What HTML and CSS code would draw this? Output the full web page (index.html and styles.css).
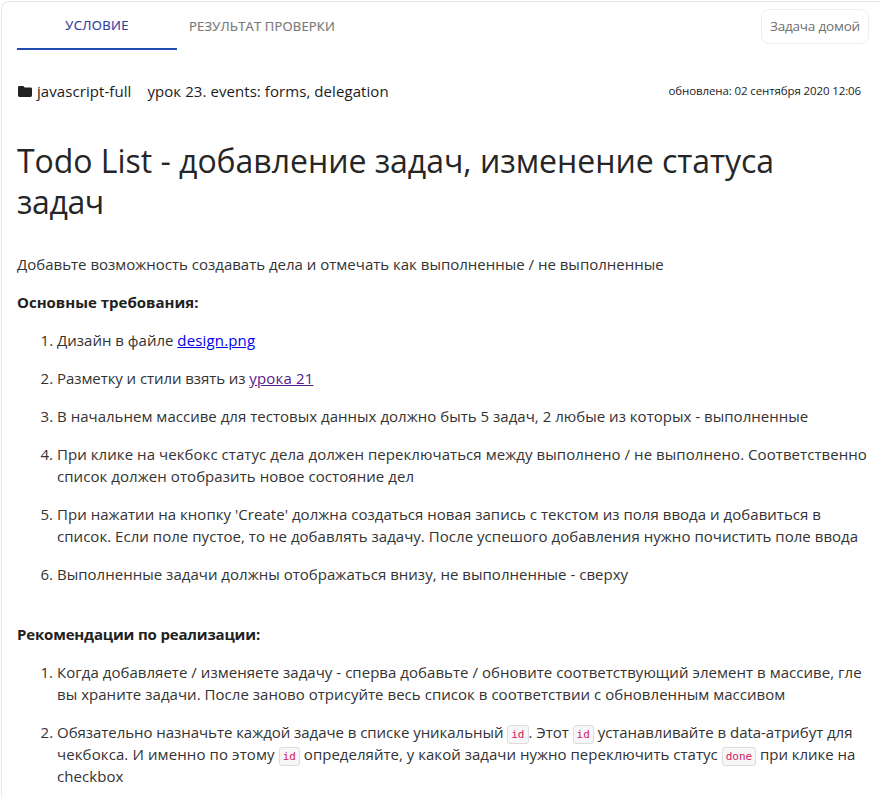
FILE: index.html
```html
<!DOCTYPE html>
<html lang="ru">
<head>
<meta charset="utf-8">
<title>Todo List</title>
<link rel="stylesheet" href="styles.css">
</head>
<body>
<main class="card">
  <header class="topbar">
    <nav class="tabs">
      <button class="tab tab-active">УСЛОВИЕ</button>
      <button class="tab">РЕЗУЛЬТАТ ПРОВЕРКИ</button>
    </nav>
    <div class="badge">Задача домой</div>
  </header>
  <div class="meta">
    <svg class="folder" viewBox="0 0 14 11"><path d="M1.4 0H5.3L6.7 1.4H12.6Q14 1.4 14 2.8V9.6Q14 11 12.6 11H1.4Q0 11 0 9.6V1.4Q0 0 1.4 0Z"/></svg>
    <span class="course">javascript-full</span>
    <span class="lesson">урок 23. events: forms, delegation</span>
    <span class="updated">обновлена: 02 сентября 2020 12:06</span>
  </div>
  <h1>Todo List - добавление задач, изменение статуса<br><span class="title-end">задач</span></h1>
  <section class="content">
    <p>Добавьте возможность создавать дела и отмечать как выполненные / не выполненные</p>
    <p><strong>Основные требования:</strong></p>
    <ol>
      <li>Дизайн в файле <a href="#design">design.png</a></li>
      <li><span class="tight-2">Разметку и стили взять из </span><a class="visited" href="#lesson">урока 21</a></li>
      <li><span class="loose-1">В начальнем массиве для тестовых данных должно быть 5 задач, 2 любые из которых - выполненные</span></li>
      <li class="loose-3">При клике на чекбокс статус дела должен переключаться между выполнено / не выполнено. Соответственно<br>список должен отобразить новое состояние дел</li>
      <li class="loose-2">При нажатии на кнопку 'Create' должна создаться новая запись с текстом из поля ввода и добавиться в<br>список. Если поле пустое, то не добавлять задачу. После успешого добавления нужно почистить поле ввода</li>
      <li class="loose-1">Выполненные задачи должны отображаться внизу, не выполненные - сверху</li>
    </ol>
    <p class="second"><strong>Рекомендации по реализации:</strong></p>
    <ol>
      <li class="loose-2">Когда добавляете / изменяете задачу - сперва добавьте / обновите соответствующий элемент в массиве, гле<br>вы храните задачи. После заново отрисуйте весь список в соответствии с обновленным массивом</li>
      <li><span class="tight-1">Обязательно назначьте каждой задаче в списке уникальный <code>id</code>. Этот <code>id</code> устанавливайте в data-атрибут для</span><br><span class="loose-4">чекбокса. И именно по этому </span><code>id</code> <span class="loose-1">определяйте, у какой задачи нужно переключить статус</span> <code>done</code> <span class="tight-1">при клике на</span><br><span class="loose-3">checkbox</span></li>
    </ol>
  </section>
</main>
</body>
</html>
```
FILE: styles.css
```css
* { box-sizing: border-box; }
body { margin: 0; width: 881px; height: 797px; overflow: hidden; background: #fff; color: #333; font-family: "Open Sans", "Noto Sans", sans-serif; }
.card { margin: 1px 0 0 1px; height: 830px; width: 900px; padding: 0 31px 0 15px; border: 1px solid #e8e8e8; border-radius: 8px; white-space: nowrap; }
.topbar { display: flex; height: 48px; justify-content: space-between; }
.tabs { display: flex; }
.tab { padding: 0 12px; height: 48px; border: 0; background: none; color: #7a7a7a; font: 500 13px "Open Sans", sans-serif; letter-spacing: 0.19px; -webkit-text-stroke: 0.2px; }
.tab-active { width: 160px; color: #303f9f; border-bottom: 2px solid #1f4cae; letter-spacing: 0.36px; }
.badge { margin: 7px 0 0; height: 35px; width: 108px; border: 1px solid #eee; border-radius: 8px; color: #707070; font-size: 13.5px; letter-spacing: -0.19px; line-height: 33px; text-align: center; }
.meta { display: flex; margin-top: 29px; height: 24px; align-items: center; color: #1c1c1c; font-size: 15px; letter-spacing: 0.07px; }
.folder { width: 14px; height: 11px; margin: 0 5px 0 1px; fill: #212121; }
.lesson { margin-left: 16px; }
.updated { margin: -2px 8px 0 auto; font-size: 11.5px; letter-spacing: -0.115px; }
h1 { margin: 37px 0 0; font-size: 32px; line-height: 41px; font-weight: 400; letter-spacing: -0.03px; color: #262626; }
.title-end { letter-spacing: -0.4px; }
.content { margin-top: 31px; font-size: 15px; line-height: 22px; }
p { margin: 0 0 16px; }
ol { margin: 0; padding-left: 40px; }
li { margin-bottom: 16px; }
.second { margin-top: 38px; }
.second strong { letter-spacing: -0.171px; }
strong { font-weight: 700; color: #212121; }
a { color: #0000ee; letter-spacing: 0.16px; }
.visited { color: #551a8b; }
.loose-1 { letter-spacing: 0.022px; }
.loose-2 { letter-spacing: 0.038px; }
.loose-3 { letter-spacing: 0.064px; }
.loose-4 { letter-spacing: 0.11px; }
.tight-1 { letter-spacing: -0.04px; }
.tight-2 { letter-spacing: -0.07px; }
code { border: 1px solid #ddd; border-radius: 3px; background: #f7f7f7; color: #d0205f; padding: 2px 3px; font: 11px "DejaVu Sans Mono", monospace; letter-spacing: 0; }
```
